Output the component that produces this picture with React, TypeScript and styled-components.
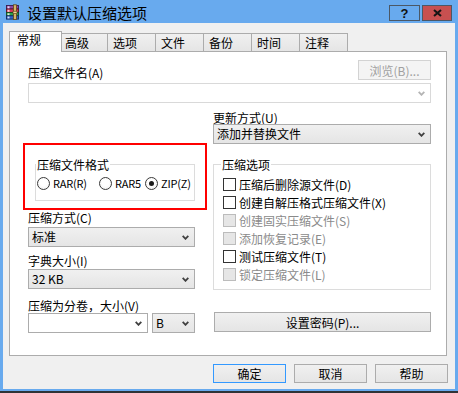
import React from "react";
import styled, { createGlobalStyle, css } from "styled-components";

const GlobalStyle = createGlobalStyle`
  *, *::before, *::after { box-sizing: border-box; }
  html, body { margin: 0; padding: 0; background: #ffffff; }
  body {
    font-family: "Noto Sans CJK SC", "Noto Sans", sans-serif;
    font-size: 12px;
    color: #000;
  }
`;

const Window = styled.div`
  width: 458px;
  height: 393px;
  display: flex;
  flex-direction: column;
  background: #68aaee;
  padding: 0 3px 2px 3px;
  border-bottom: 2px solid #2f3337;
`;

const TitleBar = styled.div`
  height: 23px;
  flex: none;
  display: flex;
  align-items: flex-start;
  padding: 4px 3px 0 2px;
`;

const AppIconSvg = styled.svg`
  flex: none;
  width: 16px;
  height: 16px;
`;

const TitleText = styled.div`
  margin-left: 6px;
  font-size: 15px;
  line-height: 18px;
  white-space: nowrap;
`;

const CaptionButtons = styled.div`
  margin-left: auto;
  margin-top: 1px;
  display: flex;
  gap: 2px;
`;

const CaptionButton = styled.div<{ $close?: boolean }>`
  width: ${(p) => (p.$close ? 30 : 31)}px;
  height: 16px;
  border: 1px solid #4b5866;
  background: ${(p) => (p.$close ? "#c75050" : "transparent")};
  display: flex;
  align-items: center;
  justify-content: center;
  font-family: "Liberation Sans", Arial, sans-serif;
  font-weight: bold;
  font-size: 13px;
  line-height: 13px;
  color: #111;
`;

const Client = styled.div`
  flex: 1;
  background: #f0f0f0;
  display: flex;
  flex-direction: column;
  padding: 8px 8px 0 6px;
`;

const TabStrip = styled.div`
  height: 20px;
  display: flex;
  align-items: flex-end;
  padding-left: 2px;
`;

const Tab = styled.div<{ $active?: boolean }>`
  position: relative;
  width: 49px;
  height: 18px;
  margin-left: -1px;
  border: 1px solid #acacac;
  border-bottom: none;
  background: linear-gradient(#f0f0f0, #e5e5e5);
  padding: 2px 0 0 5px;
  line-height: 13px;
  white-space: nowrap;
  ${(p) =>
    p.$active &&
    css`
      width: 53px;
      height: 21px;
      margin: 0 -2px -1px -2px;
      background: #ffffff;
      z-index: 2;
      padding: 1px 0 0 7px;
    `}
`;

const TabPanel = styled.div`
  height: 305px;
  background: #ffffff;
  border: 1px solid #acacac;
  padding: 8px 15px 0 18px;
  display: flex;
  flex-direction: column;
`;

const TopRow = styled.div`
  height: 20px;
  display: flex;
  justify-content: space-between;
  align-items: flex-end;
`;

const Label = styled.div<{ $mt?: number; $mb?: number }>`
  line-height: 13px;
  height: 13px;
  white-space: nowrap;
  margin-top: ${(p) => p.$mt ?? 0}px;
  margin-bottom: ${(p) => p.$mb ?? 0}px;
`;

const PushButton = styled.button<{ $w: number; $h?: number; $default?: boolean; $mt?: number; $ml?: number }>`
  width: ${(p) => p.$w}px;
  height: ${(p) => p.$h ?? 20}px;
  margin: ${(p) => p.$mt ?? 0}px 0 0 ${(p) => p.$ml ?? 0}px;
  padding: 0;
  flex: none;
  font-family: inherit;
  font-size: 12px;
  line-height: 13px;
  color: #000;
  border: 1px solid ${(p) => (p.$default ? "#3399ff" : "#acacac")};
  background: linear-gradient(#f0f0f0, #e5e5e5);
  display: flex;
  align-items: center;
  justify-content: center;
  white-space: nowrap;
  &:disabled {
    color: #a0a0a0;
    border-color: #d3d3d3;
    background: #f4f4f4;
  }
`;

const ComboBox = styled.div<{ $w?: number; $editable?: boolean; $disabled?: boolean; $mt?: number }>`
  width: ${(p) => (p.$w ? `${p.$w}px` : "100%")};
  height: 20px;
  flex: none;
  margin-top: ${(p) => p.$mt ?? 0}px;
  display: flex;
  align-items: center;
  padding: 0 5px 0 3px;
  border: 1px solid ${(p) => (p.$disabled ? "#d9d9d9" : "#acacac")};
  background: ${(p) => (p.$editable ? "#ffffff" : "linear-gradient(#f0f0f0, #e5e5e5)")};
  line-height: 14px;
  white-space: nowrap;
`;

const ComboText = styled.span`
  flex: 1;
  min-width: 0;
`;

const ArrowSvg = styled.svg<{ $disabled?: boolean }>`
  flex: none;
  width: 7px;
  height: 5px;
  stroke: ${(p) => (p.$disabled ? "#b4b4b4" : "#404040")};
`;

const Columns = styled.div`
  margin-top: 8px;
  display: grid;
  grid-template-columns: 167px 218px;
  column-gap: 18px;
`;

const Column = styled.div`
  display: flex;
  flex-direction: column;
  align-items: flex-start;
`;

const Highlight = styled.div`
  margin: 32px 0 0 -5px;
  width: 184px;
  border: 2px solid #ff0000;
  padding: 13px 10px 7px 10px;
`;

const GroupBox = styled.fieldset<{ $pl: number; $pb: number; $w: number; $mt?: number }>`
  margin: ${(p) => p.$mt ?? 0}px 0 0 0;
  min-width: 0;
  width: ${(p) => p.$w}px;
  border: 1px solid #dcdcdc;
  padding: 4px 0 ${(p) => p.$pb}px ${(p) => p.$pl}px;
`;

const GroupTitle = styled.legend<{ $ml: number }>`
  padding: 0 1px;
  margin-left: ${(p) => p.$ml}px;
  font-size: 12px;
  line-height: 13px;
  white-space: nowrap;
`;

const RadioRow = styled.div`
  height: 16px;
  display: flex;
  align-items: center;
  white-space: nowrap;
`;

const RadioItem = styled.label<{ $w?: number }>`
  display: flex;
  align-items: center;
  gap: 3px;
  width: ${(p) => (p.$w ? `${p.$w}px` : "auto")};
  flex: none;
  font-size: 11px;
  letter-spacing: -0.2px;
  line-height: 13px;
`;

const RadioCircle = styled.span<{ $checked?: boolean }>`
  width: 13px;
  height: 13px;
  border-radius: 50%;
  border: 1px solid #3a3a3a;
  background: radial-gradient(circle at 50% 40%, #ffffff 40%, #ececec 100%);
  display: flex;
  align-items: center;
  justify-content: center;
  flex: none;
  &::after {
    content: "";
    width: 5px;
    height: 5px;
    border-radius: 50%;
    background: ${(p) => (p.$checked ? "#1a1a1a" : "transparent")};
  }
`;

const CheckRow = styled.label<{ $disabled?: boolean }>`
  height: 18px;
  display: flex;
  align-items: center;
  gap: 3px;
  white-space: nowrap;
  line-height: 13px;
  color: ${(p) => (p.$disabled ? "#8a8a8a" : "#000")};
`;

const CheckBox = styled.span<{ $disabled?: boolean }>`
  width: 13px;
  height: 13px;
  flex: none;
  border: 1px solid ${(p) => (p.$disabled ? "#bcbcbc" : "#333333")};
  background: ${(p) => (p.$disabled ? "#e6e6e6" : "#ffffff")};
`;

const VolumeRow = styled.div`
  margin-top: 1px;
  display: flex;
  gap: 4px;
`;

const ButtonRow = styled.div`
  margin-top: 8px;
  margin-right: -1px;
  display: flex;
  justify-content: flex-end;
  gap: 8px;
`;

const AppIcon = () => (
  <AppIconSvg viewBox="0 0 16 16">
    <rect x="1.5" y="1.5" width="12" height="3.5" fill="#8a44a6" stroke="#3b1c4c" strokeWidth="0.9" />
    <rect x="1.5" y="5" width="12" height="3.5" fill="#d8345a" stroke="#5a1420" strokeWidth="0.9" />
    <rect x="1.5" y="8.5" width="12" height="3.3" fill="#2f9e4a" stroke="#134a20" strokeWidth="0.9" />
    <rect x="1.5" y="11.8" width="12" height="3.3" fill="#2f63c4" stroke="#142a5c" strokeWidth="0.9" />
    <rect x="2.5" y="2.3" width="2" height="2" fill="#e8d8f0" />
    <rect x="2.5" y="5.8" width="2" height="2" fill="#f6d2da" />
    <rect x="2.5" y="9.3" width="2" height="1.8" fill="#d6f0dc" />
    <rect x="2.5" y="12.6" width="2" height="1.8" fill="#d6e0f6" />
    <rect x="8.5" y="0.8" width="3" height="14.8" fill="#d8b36c" stroke="#5e4518" strokeWidth="0.8" />
    <rect x="8" y="7.2" width="4" height="2.4" fill="#f1d89a" stroke="#5e4518" strokeWidth="0.7" />
  </AppIconSvg>
);

const Arrow = ({ disabled }: { disabled?: boolean }) => (
  <ArrowSvg $disabled={disabled} viewBox="0 0 7 5" fill="none" strokeWidth="1.8">
    <polyline points="0.7,0.8 3.5,3.8 6.3,0.8" />
  </ArrowSvg>
);

const CloseGlyph = () => (
  <svg width="9" height="8" viewBox="0 0 9 8">
    <path d="M1 1 L8 7 M8 1 L1 7" stroke="#151515" strokeWidth="2.1" />
  </svg>
);

const tabs = ["常规", "高级", "选项", "文件", "备份", "时间", "注释"];

const options: { text: string; disabled?: boolean }[] = [
  { text: "压缩后删除源文件(D)" },
  { text: "创建自解压格式压缩文件(X)" },
  { text: "创建固实压缩文件(S)", disabled: true },
  { text: "添加恢复记录(E)", disabled: true },
  { text: "测试压缩文件(T)" },
  { text: "锁定压缩文件(L)", disabled: true },
];

export default function App() {
  return (
    <>
      <GlobalStyle />
      <Window>
        <TitleBar>
          <AppIcon />
          <TitleText>设置默认压缩选项</TitleText>
          <CaptionButtons>
            <CaptionButton>?</CaptionButton>
            <CaptionButton $close>
              <CloseGlyph />
            </CaptionButton>
          </CaptionButtons>
        </TitleBar>
        <Client>
          <TabStrip>
            {tabs.map((t, i) => (
              <Tab key={t} $active={i === 0}>
                {t}
              </Tab>
            ))}
          </TabStrip>
          <TabPanel>
            <TopRow>
              <Label $mb={1}>压缩文件名(A)</Label>
              <PushButton $w={73} disabled>
                浏览(B)...
              </PushButton>
            </TopRow>
            <ComboBox $editable $disabled $mt={3}>
              <ComboText />
              <Arrow disabled />
            </ComboBox>
            <Columns>
              <Column>
                <Highlight>
                  <GroupBox $w={160} $pl={1} $pb={9}>
                    <GroupTitle $ml={-1}>压缩文件格式</GroupTitle>
                    <RadioRow>
                      <RadioItem $w={62}>
                        <RadioCircle />
                        RAR(R)
                      </RadioItem>
                      <RadioItem $w={46}>
                        <RadioCircle />
                        RAR5
                      </RadioItem>
                      <RadioItem>
                        <RadioCircle $checked />
                        ZIP(Z)
                      </RadioItem>
                    </RadioRow>
                  </GroupBox>
                </Highlight>
                <Label $mt={1}>压缩方式(C)</Label>
                <ComboBox $mt={3}>
                  <ComboText>标准</ComboText>
                  <Arrow />
                </ComboBox>
                <Label $mt={7}>字典大小(I)</Label>
                <ComboBox $mt={2}>
                  <ComboText>32 KB</ComboText>
                  <Arrow />
                </ComboBox>
                <Label $mt={10}>压缩为分卷，大小(V)</Label>
                <VolumeRow>
                  <ComboBox $w={120} $editable>
                    <ComboText />
                    <Arrow />
                  </ComboBox>
                  <ComboBox $w={43}>
                    <ComboText>B</ComboText>
                    <Arrow />
                  </ComboBox>
                </VolumeRow>
              </Column>
              <Column>
                <Label>更新方式(U)</Label>
                <ComboBox>
                  <ComboText>添加并替换文件</ComboText>
                  <Arrow />
                </ComboBox>
                <GroupBox $w={218} $pl={9} $pb={6} $mt={14}>
                  <GroupTitle $ml={-2}>压缩选项</GroupTitle>
                  {options.map((o) => (
                    <CheckRow key={o.text} $disabled={o.disabled}>
                      <CheckBox $disabled={o.disabled} />
                      {o.text}
                    </CheckRow>
                  ))}
                </GroupBox>
                <PushButton $w={217} $mt={22} $ml={1}>
                  设置密码(P)...
                </PushButton>
              </Column>
            </Columns>
          </TabPanel>
          <ButtonRow>
            <PushButton $w={73} $h={19} $default>
              确定
            </PushButton>
            <PushButton $w={73} $h={19}>
              取消
            </PushButton>
            <PushButton $w={73} $h={19}>
              帮助
            </PushButton>
          </ButtonRow>
        </Client>
      </Window>
    </>
  );
}
